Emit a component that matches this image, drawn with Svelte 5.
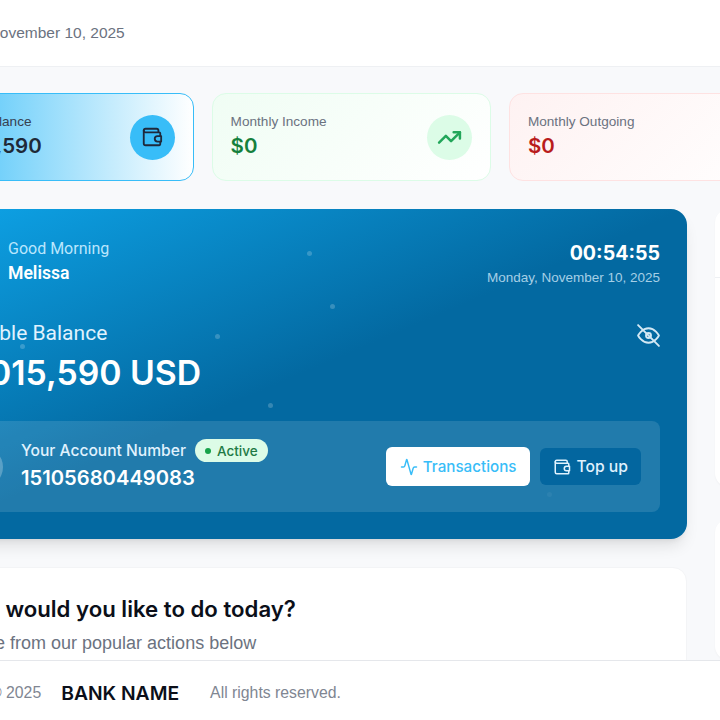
<script lang="ts">
  const dots = [
    { x: 392, y: 42, o: 0.2 },
    { x: 415, y: 95, o: 0.2 },
    { x: 300, y: 125, o: 0.2 },
    { x: 105, y: 135, o: 0.2 },
    { x: 353, y: 194, o: 0.2 },
    { x: 632, y: 283, o: 0.05 },
  ];
</script>

<div class="page">
  <header class="topbar">
    <span class="today">Monday, November 10, 2025</span>
  </header>

  <main class="content">
    <div class="left">
      <section class="stats">
        <div class="stat blue">
          <div class="stat-text">
            <div class="stat-label">Current Balance</div>
            <div class="stat-value">$1,015,590</div>
          </div>
          <div class="stat-icon">
            <svg width="22" height="22" viewBox="0 0 24 24" fill="none" stroke="currentColor" stroke-width="2" stroke-linecap="round" stroke-linejoin="round">
              <path d="M19 7V5a2 2 0 0 0-2-2H5a2 2 0 0 0 0 4h15a1 1 0 0 1 1 1v3" />
              <path d="M3 5v14a2 2 0 0 0 2 2h15a1 1 0 0 0 1-1v-3" />
              <path d="M22 11h-4a2.5 2.5 0 0 0 0 6h4z" />
            </svg>
          </div>
        </div>
        <div class="stat green">
          <div class="stat-text">
            <div class="stat-label">Monthly Income</div>
            <div class="stat-value">$0</div>
          </div>
          <div class="stat-icon">
            <svg width="25" height="25" viewBox="0 0 24 24" fill="none" stroke="currentColor" stroke-width="2.4" stroke-linecap="round" stroke-linejoin="round">
              <polyline points="22 7 13.5 15.5 8.5 10.5 2 17" />
              <polyline points="16 7 22 7 22 13" />
            </svg>
          </div>
        </div>
        <div class="stat red">
          <div class="stat-text">
            <div class="stat-label">Monthly Outgoing</div>
            <div class="stat-value">$0</div>
          </div>
        </div>
      </section>

      <section class="hero">
        {#each dots as d}
          <span class="dot" style="left:{d.x}px;top:{d.y}px;opacity:{d.o}"></span>
        {/each}

        <div class="hero-top">
          <div class="greet">
            <div class="avatar"></div>
            <div>
              <div class="hello">Good Morning</div>
              <div class="name">Melissa</div>
            </div>
          </div>
          <div class="clock">
            <div class="time">00:54:55</div>
            <div class="long-date">Monday, November 10, 2025</div>
          </div>
        </div>

        <div class="balance">
          <div>
            <div class="balance-label">Available Balance</div>
            <div class="balance-value">$1,015,590 USD</div>
          </div>
          <svg class="eye" width="25" height="25" viewBox="0 0 24 24" fill="none" stroke="currentColor" stroke-width="1.8" stroke-linecap="round" stroke-linejoin="round">
            <path d="M2 12s3.6-7 10-7 10 7 10 7-3.6 7-10 7-10-7-10-7z" />
            <circle cx="12" cy="12" r="2.4" />
            <path d="m2 2 20 20" />
          </svg>
        </div>

        <div class="account">
          <div class="acct-left">
            <div class="acct-avatar"></div>
            <div class="acct-text">
              <div class="acct-head">
                <span class="acct-label">Your Account Number</span>
                <span class="badge"><i></i>Active</span>
              </div>
              <div class="acct-number">15105680449083</div>
            </div>
          </div>
          <div class="actions">
            <button class="btn white">
              <svg width="18" height="18" viewBox="0 0 24 24" fill="none" stroke="currentColor" stroke-width="2" stroke-linecap="round" stroke-linejoin="round">
                <path d="M22 12h-2.48a2 2 0 0 0-1.93 1.46l-2.35 8.36a.25.25 0 0 1-.48 0L9.24 2.18a.25.25 0 0 0-.48 0l-2.35 8.36A2 2 0 0 1 4.49 12H2" />
              </svg>
              Transactions
            </button>
            <button class="btn dark">
              <svg width="18" height="18" viewBox="0 0 24 24" fill="none" stroke="currentColor" stroke-width="2" stroke-linecap="round" stroke-linejoin="round">
                <path d="M19 7V5a2 2 0 0 0-2-2H5a2 2 0 0 0 0 4h15a1 1 0 0 1 1 1v3" />
                <path d="M3 5v14a2 2 0 0 0 2 2h15a1 1 0 0 0 1-1v-3" />
                <path d="M22 11h-4a2.5 2.5 0 0 0 0 6h4z" />
              </svg>
              Top up
            </button>
          </div>
        </div>
      </section>

      <section class="todo">
        <h2>What would you like to do today?</h2>
        <p>Choose from our popular actions below</p>
      </section>
    </div>

    <aside class="right">
      <div class="side-card">
        <div class="side-head"></div>
      </div>
      <div class="side-card second"></div>
    </aside>
  </main>

  <footer class="footer">
    <span>© 2025</span>
    <strong>BANK NAME</strong>
    <span>All rights reserved.</span>
  </footer>
</div>

<style>
  :global(body) {
    margin: 0;
    font-family: "Liberation Sans", Arial, sans-serif;
  }

  .page {
    width: 720px;
    height: 720px;
    overflow: hidden;
    display: flex;
    flex-direction: column;
    background: #f8f9fb;
  }

  .topbar {
    flex: none;
    height: 67px;
    box-sizing: border-box;
    background: #fff;
    border-bottom: 1px solid #eef0f3;
    display: flex;
    align-items: center;
  }

  .today {
    margin-left: -74px;
    font-size: 15.5px;
    color: #6b7280;
    white-space: nowrap;
  }

  .content {
    flex: 1;
    min-height: 0;
    overflow: hidden;
    display: flex;
    gap: 28px;
    padding-top: 26px;
    margin-left: -85px;
    width: 1100px;
  }

  .left {
    flex: none;
    width: 772px;
    display: flex;
    flex-direction: column;
    gap: 28px;
  }

  .stats {
    display: flex;
    gap: 18px;
    margin-left: -0.7px;
  }

  .stat {
    flex: none;
    box-sizing: border-box;
    width: 279.3px;
    height: 88px;
    padding: 0 18px;
    border-radius: 14px;
    border: 1px solid;
    display: flex;
    align-items: center;
    justify-content: space-between;
  }

  .stat.blue {
    border-color: #38bdf8;
    background: linear-gradient(90deg, #38bdf8, #fff);
    color: #1f2937;
  }

  .stat.green {
    border-color: #dcfce7;
    background: linear-gradient(135deg, #f0fdf4, #fff);
    color: #15803d;
  }

  .stat.red {
    border-color: #fee2e2;
    background: linear-gradient(135deg, #fef2f2, #fff);
    color: #b91c1c;
  }

  .stat-text {
    padding-bottom: 3px;
    white-space: nowrap;
  }

  .stat-label {
    font-size: 13.6px;
    line-height: 20px;
    color: #6b7280;
  }

  .stat.blue .stat-label {
    color: #374151;
  }

  .stat-value {
    font-family: Inter, sans-serif;
    font-size: 20.5px;
    font-weight: 600;
    line-height: 28px;
  }

  .stat-icon {
    width: 45px;
    height: 45px;
    border-radius: 50%;
    display: flex;
    align-items: center;
    justify-content: center;
  }

  .blue .stat-icon {
    background: #38bdf8;
    color: #1e293b;
  }

  .green .stat-icon {
    background: #dcfce7;
    color: #22a65a;
  }

  .hero {
    position: relative;
    flex: none;
    box-sizing: border-box;
    height: 330px;
    padding: 28px 27px 27px 28px;
    border-radius: 16px;
    color: #fff;
    overflow: hidden;
    background: linear-gradient(to bottom right, #0ea5e9 0%, #0369a1 50%, #0369a1 100%);
    box-shadow: 0 10px 15px -3px rgba(0, 0, 0, 0.1), 0 4px 6px -4px rgba(0, 0, 0, 0.1);
    display: flex;
    flex-direction: column;
    font-family: Inter, sans-serif;
  }

  .dot {
    position: absolute;
    width: 5px;
    height: 5px;
    border-radius: 50%;
    background: #fff;
  }

  .hero-top {
    display: flex;
    justify-content: space-between;
    align-items: flex-start;
  }

  .greet {
    display: flex;
    align-items: center;
    gap: 17px;
    padding-top: 1px;
  }

  .avatar {
    width: 48px;
    height: 48px;
    border-radius: 50%;
    background: rgba(255, 255, 255, 0.2);
  }

  .hello {
    font-size: 16px;
    line-height: 22px;
    color: #bae6fd;
    font-family: Roboto, sans-serif;
  }

  .name {
    font-size: 17.6px;
    font-weight: 600;
    line-height: 26px;
    font-family: Roboto, sans-serif;
  }

  .clock {
    text-align: right;
    padding-top: 2px;
  }

  .time {
    font-size: 19.6px;
    font-weight: 700;
    line-height: 29px;
  }

  .long-date {
    font-family: "Liberation Sans", sans-serif;
    font-size: 13.5px;
    line-height: 20px;
    color: #a5cfe6;
  }

  .balance {
    display: flex;
    justify-content: space-between;
    align-items: center;
    margin-top: 31px;
  }

  .balance-label {
    font-size: 21px;
    line-height: 28px;
    color: #e0f2fe;
    font-family: Roboto, sans-serif;
  }

  .balance-value {
    font-size: 33.75px;
    font-weight: 600;
    line-height: 44px;
    margin-top: 4px;
    white-space: nowrap;
  }

  .eye {
    color: #d3e8f4;
    margin-right: -1px;
    margin-bottom: 43px;
  }

  .account {
    margin-top: auto;
    height: 91px;
    box-sizing: border-box;
    padding: 0 19px 0 20px;
    border-radius: 8px;
    background: rgba(255, 255, 255, 0.12);
    display: flex;
    align-items: center;
    justify-content: space-between;
  }

  .acct-left {
    display: flex;
    align-items: center;
    gap: 18px;
  }

  .acct-avatar {
    width: 40px;
    height: 40px;
    border-radius: 50%;
    background: rgba(255, 255, 255, 0.25);
  }

  .acct-text {
    padding-bottom: 2px;
  }

  .acct-head {
    display: flex;
    align-items: center;
    gap: 9px;
  }

  .acct-label {
    font-size: 15.6px;
    font-weight: 500;
    color: #e0f2fe;
  }

  .badge {
    display: inline-flex;
    align-items: center;
    gap: 6px;
    height: 23px;
    padding: 0 10px;
    border-radius: 12px;
    background: #dcfce7;
    color: #1f7a45;
    font-size: 13.5px;
    font-weight: 500;
  }

  .badge i {
    width: 6px;
    height: 6px;
    border-radius: 50%;
    background: #16a34a;
  }

  .acct-number {
    font-size: 20.2px;
    font-weight: 600;
    line-height: 28px;
    margin-top: 2px;
  }

  .actions {
    display: flex;
    align-items: center;
    gap: 10px;
  }

  .btn {
    display: flex;
    align-items: center;
    gap: 5px;
    border: none;
    border-radius: 6px;
    font-family: Inter, sans-serif;
    font-weight: 500;
  }

  .btn.white {
    height: 39px;
    padding: 0 14px;
    font-size: 15.2px;
    background: #fff;
    color: #38bdf8;
  }

  .btn.dark {
    height: 37px;
    padding: 0 13px;
    font-size: 15.7px;
    background: #03669f;
    color: #e0f2fe;
  }

  .todo {
    flex: none;
    height: 140px;
    box-sizing: border-box;
    padding: 25px 27px 0;
    border: 1px solid #f3f4f6;
    border-radius: 14px;
    background: #fff;
  }

  .todo h2 {
    margin: 0;
    font-family: Inter, sans-serif;
    font-size: 22.2px;
    font-weight: 600;
    line-height: 32px;
    color: #0b0f19;
    white-space: nowrap;
  }

  .todo p {
    margin: 6px 0 0;
    font-size: 18px;
    line-height: 24px;
    color: #6b7280;
    white-space: nowrap;
  }

  .right {
    flex: none;
    width: 300px;
    display: flex;
    flex-direction: column;
    gap: 32px;
    margin-top: 116px;
  }

  .side-card {
    height: 394px;
    border-radius: 14px;
    background: #fff;
    box-shadow: 0 1px 2px rgba(0, 0, 0, 0.04);
  }

  .side-card.second {
    height: 200px;
  }

  .side-head {
    height: 68px;
    border-bottom: 1px solid #eef0f3;
  }

  .footer {
    flex: none;
    height: 60px;
    box-sizing: border-box;
    background: #fff;
    border-top: 1px solid #e5e7eb;
    display: flex;
    align-items: center;
    gap: 20px;
    margin-left: -10px;
    padding-top: 4px;
    font-size: 15.8px;
    color: #808692;
    white-space: nowrap;
  }

  .footer strong {
    font-family: Inter, sans-serif;
    font-size: 19.3px;
    font-weight: 600;
    color: #0b0f19;
    margin-right: 11px;
  }
</style>
